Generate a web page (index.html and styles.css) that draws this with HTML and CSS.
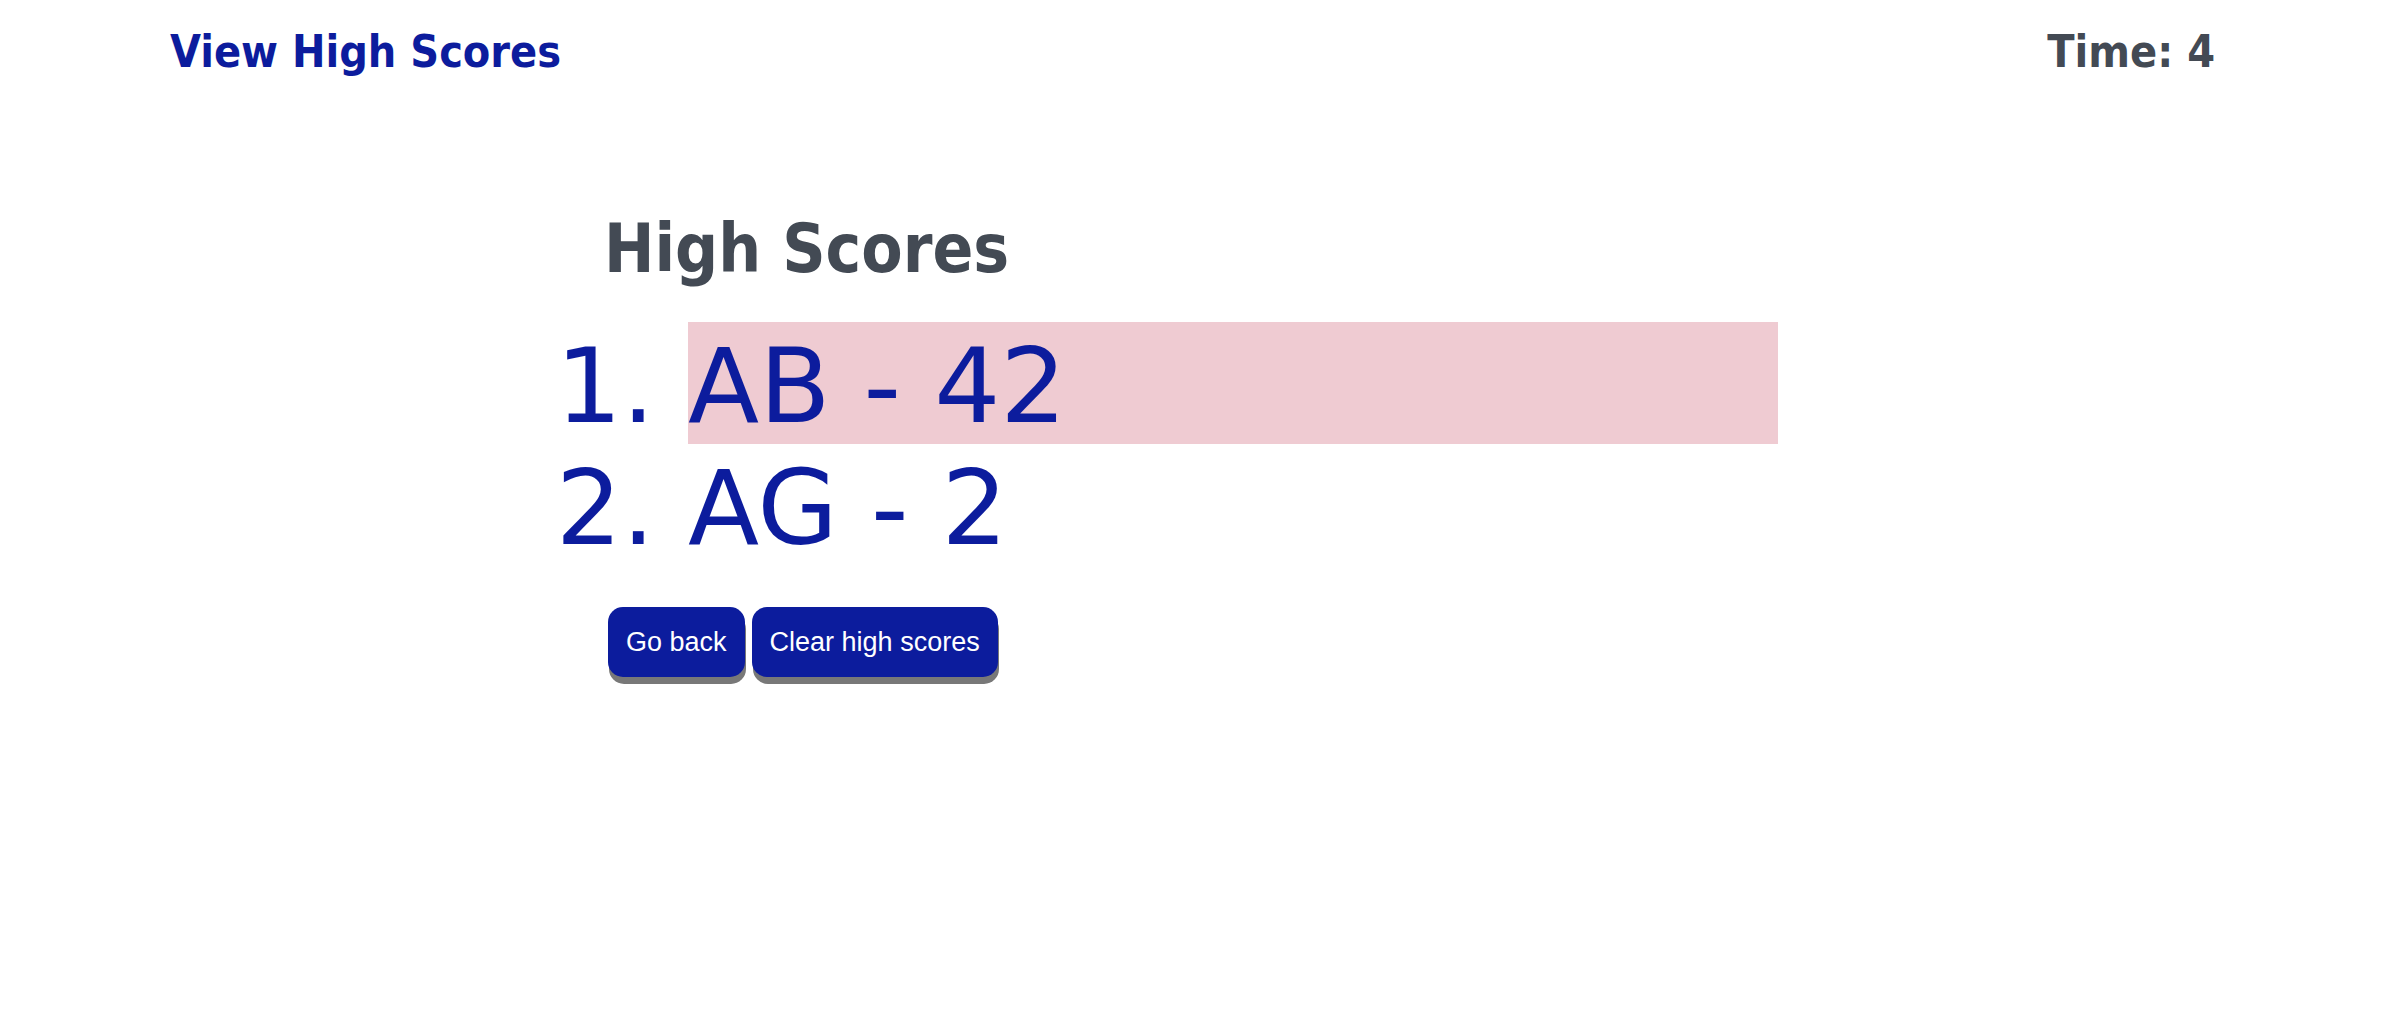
FILE: index.html
```html
<!DOCTYPE html>
<html lang="en">
<head>
<meta charset="utf-8">
<title>High Scores</title>
<link rel="stylesheet" href="styles.css">
</head>
<body>
<header class="topbar">
  <a class="view-link" href="#">View High Scores</a>
  <div class="timer">Time: 4</div>
</header>
<main class="panel">
  <h1 class="title">High Scores</h1>
  <ol class="scores">
    <li class="score highlight">AB - 42</li>
    <li class="score">AG - 2</li>
  </ol>
  <div class="actions">
    <button class="btn">Go back</button>
    <button class="btn">Clear high scores</button>
  </div>
</main>
</body>
</html>
```
FILE: styles.css
```css
html, body {
  margin: 0;
  padding: 0;
  background: #ffffff;
}

body {
  font-family: "DejaVu Sans", Verdana, sans-serif;
}

.topbar {
  display: flex;
  justify-content: space-between;
  align-items: baseline;
  padding: 26px 167px 0 170px;
  font-family: "DejaVu Sans", sans-serif;
  font-stretch: condensed;
  font-weight: bold;
  font-size: 44.5px;
  line-height: 52px;
}

.view-link {
  color: #0c1c9d;
  text-decoration: none;
}

.timer {
  color: #434a54;
}

.panel {
  width: 1174px;
  margin: 0 auto;
}

.title {
  margin: 132px 0 0 0;
  font-family: "DejaVu Sans", sans-serif;
  font-stretch: condensed;
  font-weight: bold;
  font-size: 67px;
  line-height: 78px;
  color: #434a54;
}

.scores {
  margin: 34px 0 0 0;
  padding: 0 0 0 84px;
  color: #0c1c9d;
  font-size: 104px;
}

.score {
  height: 122px;
  box-sizing: border-box;
  padding-top: 7px;
  line-height: 115px;
}

.highlight {
  background: #efcbd2;
}

.actions {
  display: flex;
  align-items: flex-start;
  gap: 7px;
  margin: 41px 0 0 4px;
  padding-bottom: 12px;
}

.btn {
  display: block;
  box-sizing: border-box;
  font-family: "Liberation Sans", Arial, sans-serif;
  font-size: 27px;
  color: #ffffff;
  background-color: #0c1c9d;
  border: 0 solid transparent;
  border-radius: 15px;
  height: 70px;
  margin: 0;
  padding: 0 18px;
  box-shadow: 1px 7px 0 0 #787878;
  cursor: pointer;
}
```
